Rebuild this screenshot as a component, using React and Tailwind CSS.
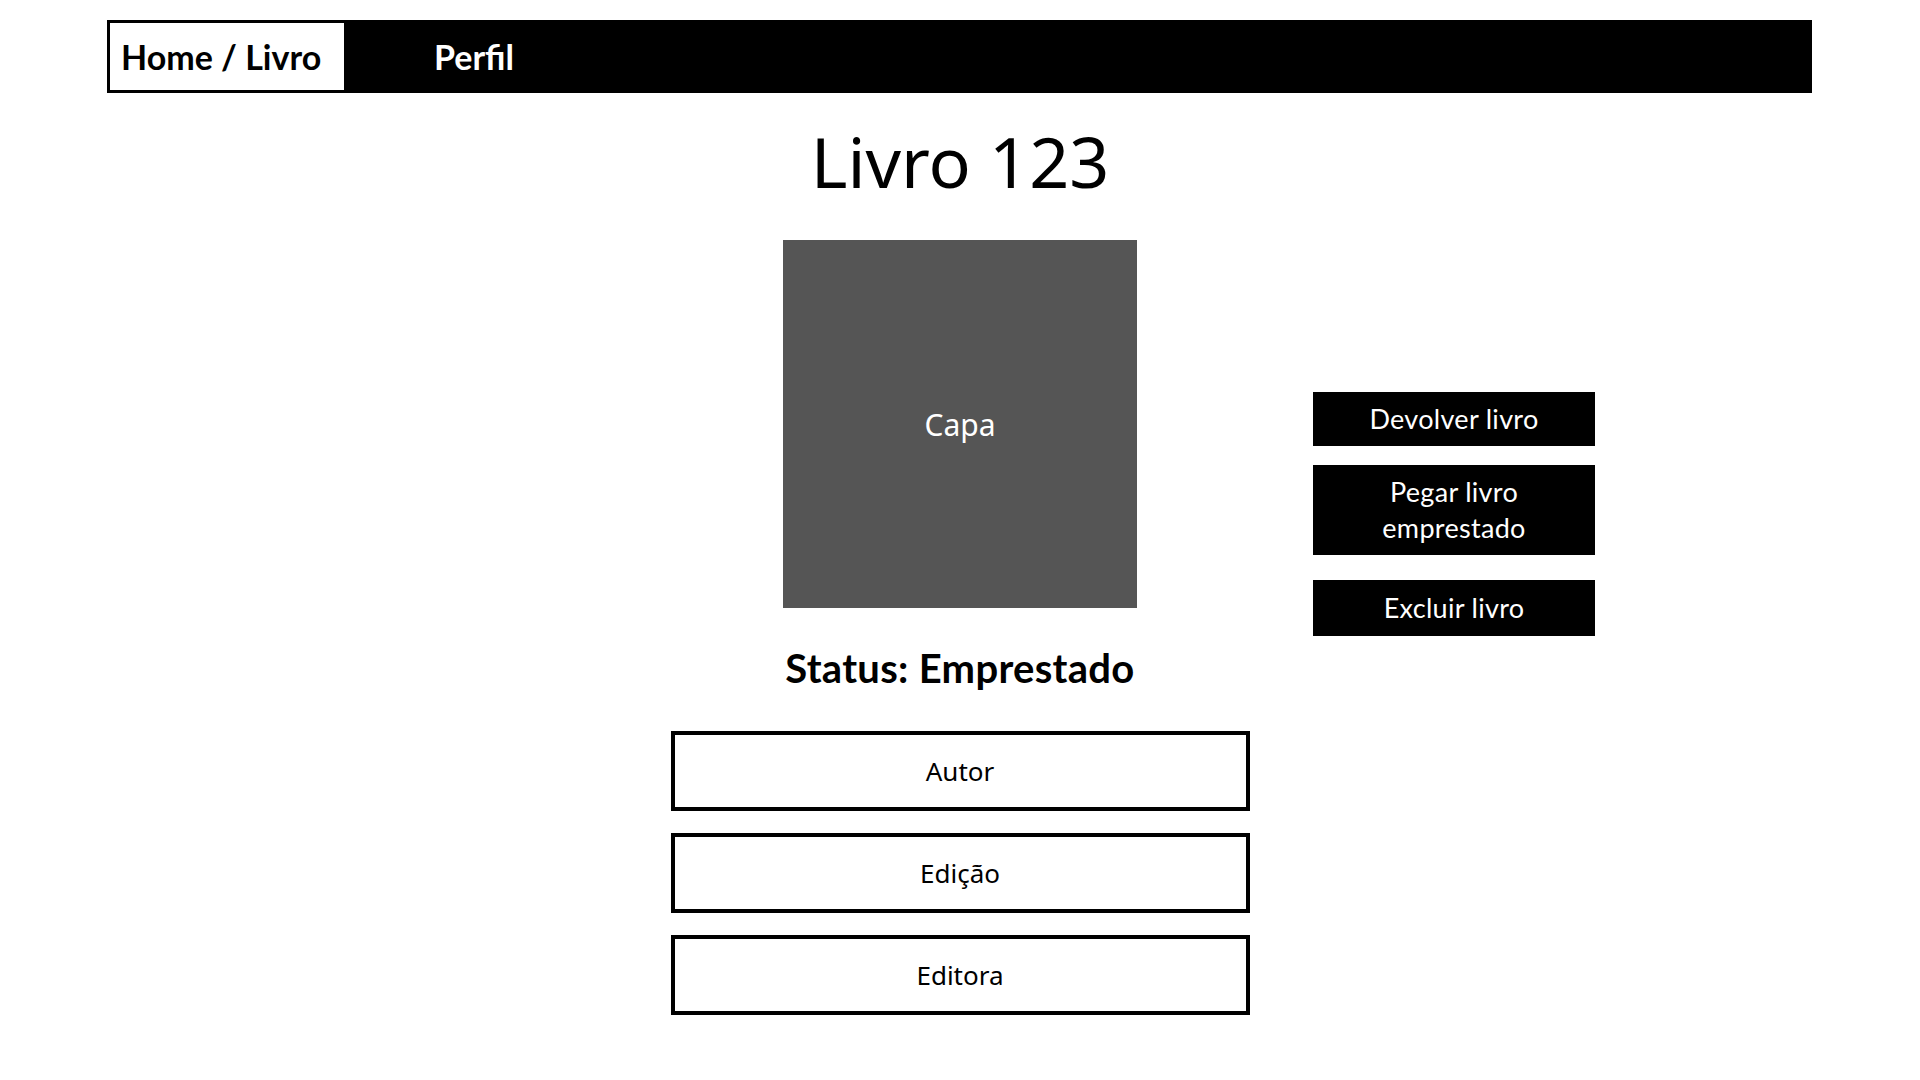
import React from 'react';

const details = ['Autor', 'Edição', 'Editora'];

const App = () => {
  return (
    <div className="min-h-screen w-full bg-white pt-5 font-['Lato',sans-serif] text-black">
      {/* top bar */}
      <nav className="ml-[107px] flex h-[73px] w-[1705px] bg-black p-[3px]">
        <div className="flex w-[234px] items-center bg-white pl-[11px] text-[34px] font-bold">
          Home / Livro
        </div>
        <div className="flex w-[260px] items-center justify-center text-[34px] font-bold text-white">
          Perfil
        </div>
      </nav>

      <h1 className="mt-8 text-center font-['Noto_Sans',sans-serif] text-[70px] leading-[72px]">
        Livro 123
      </h1>

      <div className="mt-[43px] grid w-full grid-cols-[1fr_354px_1fr]">
        <div />
        <div className="flex h-[368px] items-center justify-center bg-[#555555] font-['Noto_Sans',sans-serif] text-[30px] text-white">
          Capa
        </div>
        {/* action buttons, hanging beside the cover */}
        <div className="h-[368px] pl-[176px] pt-[152px]">
          <div className="flex w-[282px] flex-col text-[27px] tracking-[0.3px] text-white">
            <button className="flex h-[54px] items-center justify-center bg-black">
              Devolver livro
            </button>
            <button className="mt-[19px] flex h-[90px] flex-col items-center justify-center bg-black leading-[36px]">
              <span>Pegar livro</span>
              <span>emprestado</span>
            </button>
            <button className="mt-[25px] flex h-[56px] items-center justify-center bg-black">
              Excluir livro
            </button>
          </div>
        </div>
      </div>

      <p className="mt-9 text-center text-[40px] leading-[48px] font-bold tracking-[0.3px]">
        Status: Emprestado
      </p>

      <div className="mx-auto mt-[39px] flex w-[579px] flex-col gap-[22px]">
        {details.map((item) => (
          <div
            key={item}
            className="flex h-[80px] items-center justify-center border-4 border-black font-['Noto_Sans',sans-serif] text-[26px]"
          >
            {item}
          </div>
        ))}
      </div>
    </div>
  );
};

export default App;
